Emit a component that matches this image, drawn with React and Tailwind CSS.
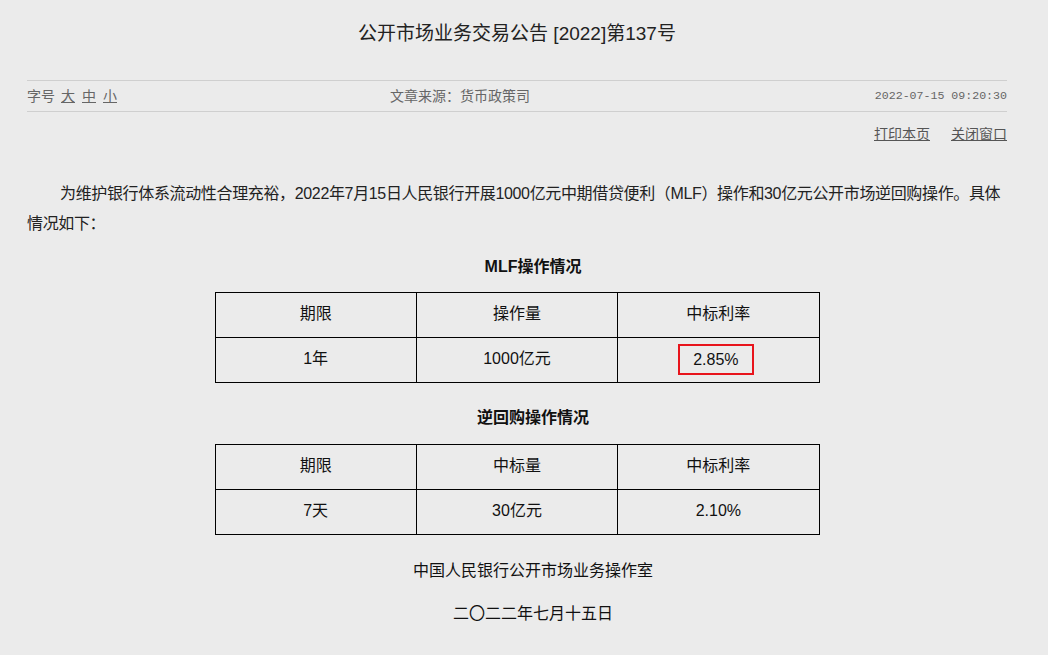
import React from "react";

const FONT = { fontFamily: '"Liberation Sans", "Noto Sans CJK SC", sans-serif' };

function DataTable({ head, row, highlight }) {
  return (
    <table className="mx-auto w-[605px] border-collapse border border-black text-[16px] text-[#111]">
      <tbody>
        <tr className="h-[45px]">
          {head.map((h, i) => (
            <td key={i} className="w-1/3 border border-black pb-[3px] text-center align-middle">
              {h}
            </td>
          ))}
        </tr>
        <tr className="h-[45px]">
          {row.map((c, i) => (
            <td key={i} className="w-1/3 border border-black pb-[2px] text-center align-middle">
              {highlight && i === 2 ? (
                <span className="mr-[5px] inline-block border-2 border-[#e8141c] px-[13px] py-[3px] leading-[21px]">
                  {c}
                </span>
              ) : (
                c
              )}
            </td>
          ))}
        </tr>
      </tbody>
    </table>
  );
}

export default function App() {
  return (
    <div className="min-h-[655px] w-full bg-[#ebebeb] text-[#222]" style={FONT}>
      <div className="ml-[27px] w-[980px]">
        <div className="pt-[22px] text-center text-[19px] leading-[24px] text-[#222]">
          公开市场业务交易公告 [2022]第137号
        </div>

        <div className="mt-[34px] grid h-[32px] grid-cols-[363px_1fr_auto] items-center border-y border-[#cfcfcf] text-[14px] leading-[30px] text-[#666]">
          <div>
            字号<span className="ml-[6px] underline">大</span>
            <span className="ml-[7px] underline">中</span>
            <span className="ml-[7px] underline">小</span>
          </div>
          <div>文章来源：货币政策司</div>
          <div className="text-[11.6px]" style={{ fontFamily: '"Liberation Mono", monospace' }}>
            2022-07-15 09:20:30
          </div>
        </div>

        <div className="flex justify-end gap-[21px] pt-[13px] text-[14px] leading-[18px] text-[#555]">
          <span className="underline">打印本页</span>
          <span className="underline">关闭窗口</span>
        </div>

        <p className="mt-[36px] indent-[33px] text-[16px] leading-[30px] tracking-[-0.35px] text-[#222]">
          为维护银行体系流动性合理充裕，2022年7月15日人民银行开展1000亿元中期借贷便利（MLF）操作和30亿元公开市场逆回购操作。具体
          <br />
          情况如下：
        </p>

        <div className="mt-[16px] indent-[32px] text-center text-[16px] font-bold leading-[24px] text-[#111]">
          MLF操作情况
        </div>
        <div className="mt-[13px]">
          <DataTable head={["期限", "操作量", "中标利率"]} row={["1年", "1000亿元", "2.85%"]} highlight />
        </div>

        <div className="mt-[23px] indent-[32px] text-center text-[16px] font-bold leading-[24px] text-[#111]">
          逆回购操作情况
        </div>
        <div className="mt-[14px]">
          <DataTable head={["期限", "中标量", "中标利率"]} row={["7天", "30亿元", "2.10%"]} />
        </div>

        <div className="mt-[24px] indent-[32px] text-center text-[16px] leading-[24px] text-[#111]">
          中国人民银行公开市场业务操作室
        </div>
        <div className="mt-[19px] indent-[32px] text-center text-[16px] leading-[24px] text-[#111]">
          二〇二二年七月十五日
        </div>
      </div>
    </div>
  );
}
